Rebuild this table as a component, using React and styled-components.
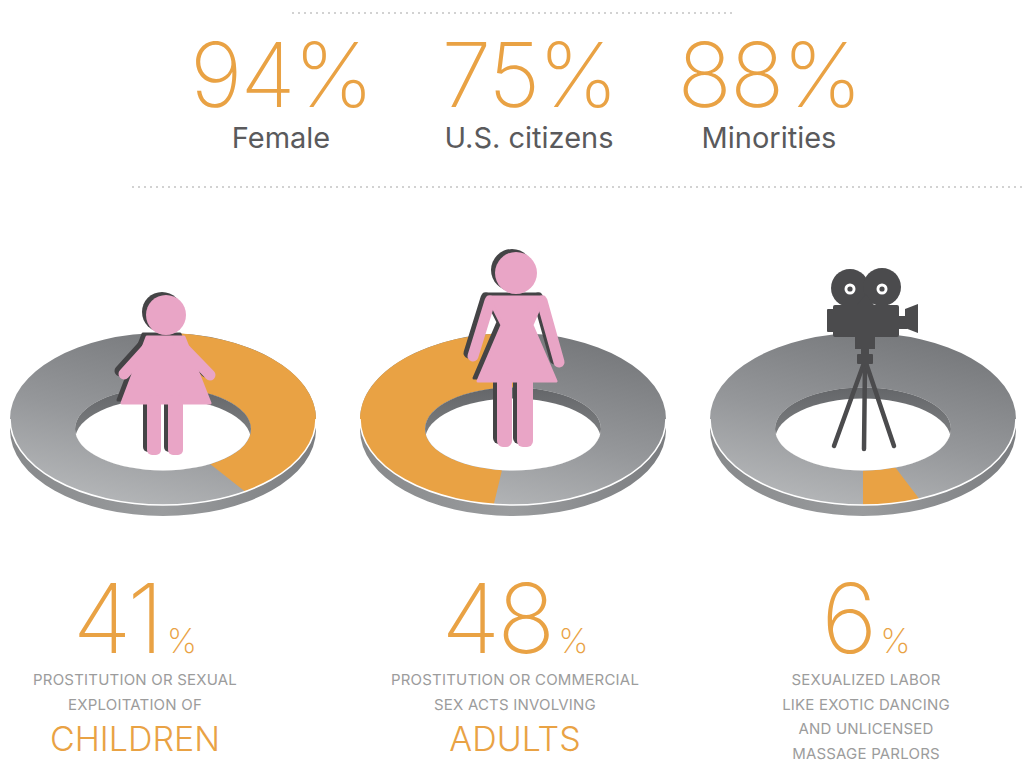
import React from 'react';
import styled, { createGlobalStyle } from 'styled-components';

const ORANGE = '#e9a244';
const DARK = '#444446';
const PINK = '#e9a5c6';

const GlobalStyle = createGlobalStyle`
  body {
    margin: 0;
    background: #ffffff;
    font-family: Inter, 'Noto Sans', sans-serif;
  }
`;

const stats = [
  { value: '94%', label: 'Female' },
  { value: '75%', label: 'U.S. citizens' },
  { value: '88%', label: 'Minorities' },
];

const facts = [
  { value: '41', lines: ['PROSTITUTION OR SEXUAL', 'EXPLOITATION OF'], big: 'CHILDREN' },
  { value: '48', lines: ['PROSTITUTION OR COMMERCIAL', 'SEX ACTS INVOLVING'], big: 'ADULTS' },
  { value: '6', lines: ['SEXUALIZED LABOR', 'LIKE EXOTIC DANCING', 'AND UNLICENSED', 'MASSAGE PARLORS'] },
];

// ring geometry, svg local coords
const CX = 160;
const OY = 174;
const ORX = 153;
const ORY = 86;
const IY = 184;
const IRX = 88;
const IRY = 41.5;
const T = 11;

const pt = (cx, cy, rx, ry, t) => [cx + rx * Math.cos(t), cy + ry * Math.sin(t)];

const sectorPath = (pct, startDeg, dir) => {
  const a0 = (startDeg * Math.PI) / 180;
  const a1 = a0 + dir * pct * 2 * Math.PI;
  const large = pct > 0.5 ? 1 : 0;
  const sweep = dir > 0 ? 1 : 0;
  const [ox0, oy0] = pt(CX, OY, ORX, ORY, a0);
  const [ox1, oy1] = pt(CX, OY, ORX, ORY, a1);
  const [ix1, iy1] = pt(CX, IY, IRX, IRY, a1);
  const [ix0, iy0] = pt(CX, IY, IRX, IRY, a0);
  return `M${ox0},${oy0} A${ORX},${ORY} 0 ${large} ${sweep} ${ox1},${oy1} L${ix1},${iy1} A${IRX},${IRY} 0 ${large} ${1 - sweep} ${ix0},${iy0} Z`;
};

const ringPath =
  `M${CX - ORX},${OY} A${ORX},${ORY} 0 1 0 ${CX + ORX},${OY} A${ORX},${ORY} 0 1 0 ${CX - ORX},${OY} Z ` +
  `M${CX - IRX},${IY} A${IRX},${IRY} 0 1 0 ${CX + IRX},${IY} A${IRX},${IRY} 0 1 0 ${CX - IRX},${IY} Z`;

const sidePath = `M${CX - ORX},${OY} L${CX - ORX},${OY + T} A${ORX},${ORY} 0 0 0 ${CX + ORX},${OY + T} L${CX + ORX},${OY} A${ORX},${ORY} 0 0 1 ${CX - ORX},${OY} Z`;

const Ring = ({ id, pct, start, dir, children }) => (
  <svg width="320" height="280" viewBox="0 0 320 280">
    <defs>
      <linearGradient id={`face-${id}`} x1="0.7" y1="0" x2="0.3" y2="1">
        <stop offset="0" stopColor="#75777a" />
        <stop offset="0.55" stopColor="#95979a" />
        <stop offset="1" stopColor="#b5b7b9" />
      </linearGradient>
      <linearGradient id={`side-${id}`} x1="0" y1="0" x2="1" y2="0">
        <stop offset="0" stopColor="#87898b" />
        <stop offset="0.5" stopColor="#9a9c9e" />
        <stop offset="1" stopColor="#7b7d80" />
      </linearGradient>
      <linearGradient id={`wall-${id}`} x1="0" y1="0" x2="0" y2="1">
        <stop offset="0" stopColor="#646669" />
        <stop offset="1" stopColor="#8d8f91" />
      </linearGradient>
      <clipPath id={`hole-${id}`}>
        <ellipse cx={CX} cy={IY} rx={IRX} ry={IRY} />
      </clipPath>
    </defs>
    <path d={sidePath} fill={`url(#side-${id})`} />
    <path d={ringPath} fill={`url(#face-${id})`} fillRule="evenodd" />
    <path d={sectorPath(pct, start, dir)} fill={ORANGE} />
    <path
      d={`M${CX - ORX},${OY} A${ORX},${ORY} 0 0 0 ${CX + ORX},${OY}`}
      fill="none"
      stroke="#ffffff"
      strokeWidth="1.6"
    />
    <ellipse cx={CX} cy={IY} rx={IRX} ry={IRY} fill={`url(#wall-${id})`} />
    <ellipse cx={CX} cy={IY + T} rx={IRX} ry={IRY} fill="#ffffff" clipPath={`url(#hole-${id})`} />
    {children}
  </svg>
);

const GirlShape = ({ fill }) => (
  <g fill={fill} stroke={fill}>
    <circle cx="163" cy="70" r="20" stroke="none" />
    <polygon points="144,92 181,92 207,158 119,158" strokeWidth="3" strokeLinejoin="round" />
    <line x1="149" y1="98" x2="121" y2="129" strokeWidth="11" strokeLinecap="round" />
    <line x1="176" y1="98" x2="207" y2="130" strokeWidth="11" strokeLinecap="round" />
    <rect x="144" y="150" width="14" height="60" rx="5" stroke="none" />
    <rect x="165" y="150" width="15" height="60" rx="5" stroke="none" />
  </g>
);

const Girl = () => (
  <>
    <g transform="translate(-4,-3)">
      <GirlShape fill={DARK} />
    </g>
    <GirlShape fill={PINK} />
  </>
);

const WomanShape = ({ fill }) => (
  <g fill={fill} stroke={fill}>
    <circle cx="163" cy="28" r="21" stroke="none" />
    <polygon points="135,52 191,52 179,80 203,136 125,136 149,80" strokeWidth="3" strokeLinejoin="round" />
    <line x1="137" y1="56" x2="120" y2="111" strokeWidth="11" strokeLinecap="round" />
    <line x1="189" y1="56" x2="206" y2="117" strokeWidth="11" strokeLinecap="round" />
    <rect x="144" y="128" width="15" height="74" rx="6" stroke="none" />
    <rect x="164" y="128" width="16" height="74" rx="6" stroke="none" />
  </g>
);

const Woman = () => (
  <>
    <g transform="translate(-4,-3)">
      <WomanShape fill={DARK} />
    </g>
    <WomanShape fill={PINK} />
  </>
);

const Camera = () => (
  <g fill="#4b4b4d">
    <g stroke="#4b4b4d" strokeWidth="4.5" strokeLinecap="round">
      <line x1="161" y1="118" x2="131" y2="201" />
      <line x1="162" y1="118" x2="161" y2="204" />
      <line x1="163" y1="118" x2="191" y2="201" />
    </g>
    <circle cx="147" cy="43" r="19" />
    <circle cx="179" cy="42" r="19" />
    <circle cx="147" cy="44" r="5.5" fill="#ffffff" />
    <circle cx="147" cy="44" r="2.6" />
    <circle cx="179" cy="44" r="5.5" fill="#ffffff" />
    <circle cx="179" cy="44" r="2.6" />
    <polygon points="154,60 171,60 163,49" />
    <rect x="130" y="60" width="66" height="32" rx="2" />
    <rect x="124" y="64" width="8" height="23" rx="1" />
    <rect x="195" y="71" width="9" height="13" />
    <polygon points="202,64 215,59 215,88 202,83" />
    <rect x="152" y="92" width="20" height="12" />
    <rect x="158" y="103" width="8" height="7" />
    <rect x="154" y="109" width="16" height="10" rx="1" />
  </g>
);

const App = () => (
  <Page>
    <GlobalStyle />
    <DotRule $short />
    <StatsRow>
      {stats.map((s) => (
        <Stat key={s.label}>
          <StatValue>{s.value}</StatValue>
          <StatLabel>{s.label}</StatLabel>
        </Stat>
      ))}
    </StatsRow>
    <DotRule />
    <ChartsRow>
      <Ring id="a" pct={0.41} start={-90} dir={1}>
        <Girl />
      </Ring>
      <Ring id="b" pct={0.48} start={-90} dir={-1}>
        <Woman />
      </Ring>
      <Ring id="c" pct={0.06} start={90} dir={-1}>
        <Camera />
      </Ring>
    </ChartsRow>
    <FactsRow>
      {facts.map((f) => (
        <Fact key={f.value}>
          <FactValue>
            {f.value}
            <Pct>%</Pct>
          </FactValue>
          {f.lines.map((l) => (
            <FactLine key={l}>{l}</FactLine>
          ))}
          {f.big && <FactBig>{f.big}</FactBig>}
        </Fact>
      ))}
    </FactsRow>
  </Page>
);

export default App;

const Page = styled.div`
  width: 1024px;
  height: 768px;
  overflow: hidden;
  padding-top: 12px;
  box-sizing: border-box;
`;

const DotRule = styled.div`
  height: 2px;
  width: ${(p) => (p.$short ? '446px' : '894px')};
  margin-left: ${(p) => (p.$short ? '290px' : '130px')};
  margin-top: ${(p) => (p.$short ? '0' : '31px')};
  background-image: radial-gradient(circle, #d2d2d2 0.8px, transparent 1px);
  background-size: 6px 2px;
  background-repeat: repeat-x;
`;

const StatsRow = styled.div`
  display: grid;
  grid-template-columns: 200px 296px 184px;
  margin: 20px 0 0 181px;
`;

const Stat = styled.div`
  display: flex;
  flex-direction: column;
  align-items: center;
  white-space: nowrap;
`;

const StatValue = styled.div`
  font-size: 90px;
  line-height: 82px;
  font-weight: 200;
  color: ${ORANGE};
  letter-spacing: -2px;
`;

const StatLabel = styled.div`
  font-size: 29px;
  line-height: 35px;
  font-weight: 400;
  color: #5a5a5c;
  margin-top: 4px;
`;

const ChartsRow = styled.div`
  display: flex;
  gap: 30px;
  padding-left: 3px;
  margin-top: 57px;
  height: 280px;
`;

const FactsRow = styled.div`
  display: grid;
  grid-template-columns: 270px 490px 212px;
  margin-top: 45px;
`;

const Fact = styled.div`
  display: flex;
  flex-direction: column;
  align-items: center;
  white-space: nowrap;
`;

const FactValue = styled.div`
  font-size: 96px;
  line-height: 96px;
  font-weight: 200;
  color: ${ORANGE};
  letter-spacing: -3px;
  margin-bottom: 2px;
`;

const Pct = styled.span`
  font-size: 34px;
  line-height: 1;
  letter-spacing: 0;
  margin-left: 6px;
`;

const FactLine = styled.div`
  font-size: 15px;
  line-height: 24.5px;
  font-weight: 400;
  color: #9c9c9c;
  letter-spacing: 0.2px;
`;

const FactBig = styled.div`
  font-size: 34px;
  line-height: 36px;
  font-weight: 300;
  color: ${ORANGE};
  margin-top: 4px;
`;
